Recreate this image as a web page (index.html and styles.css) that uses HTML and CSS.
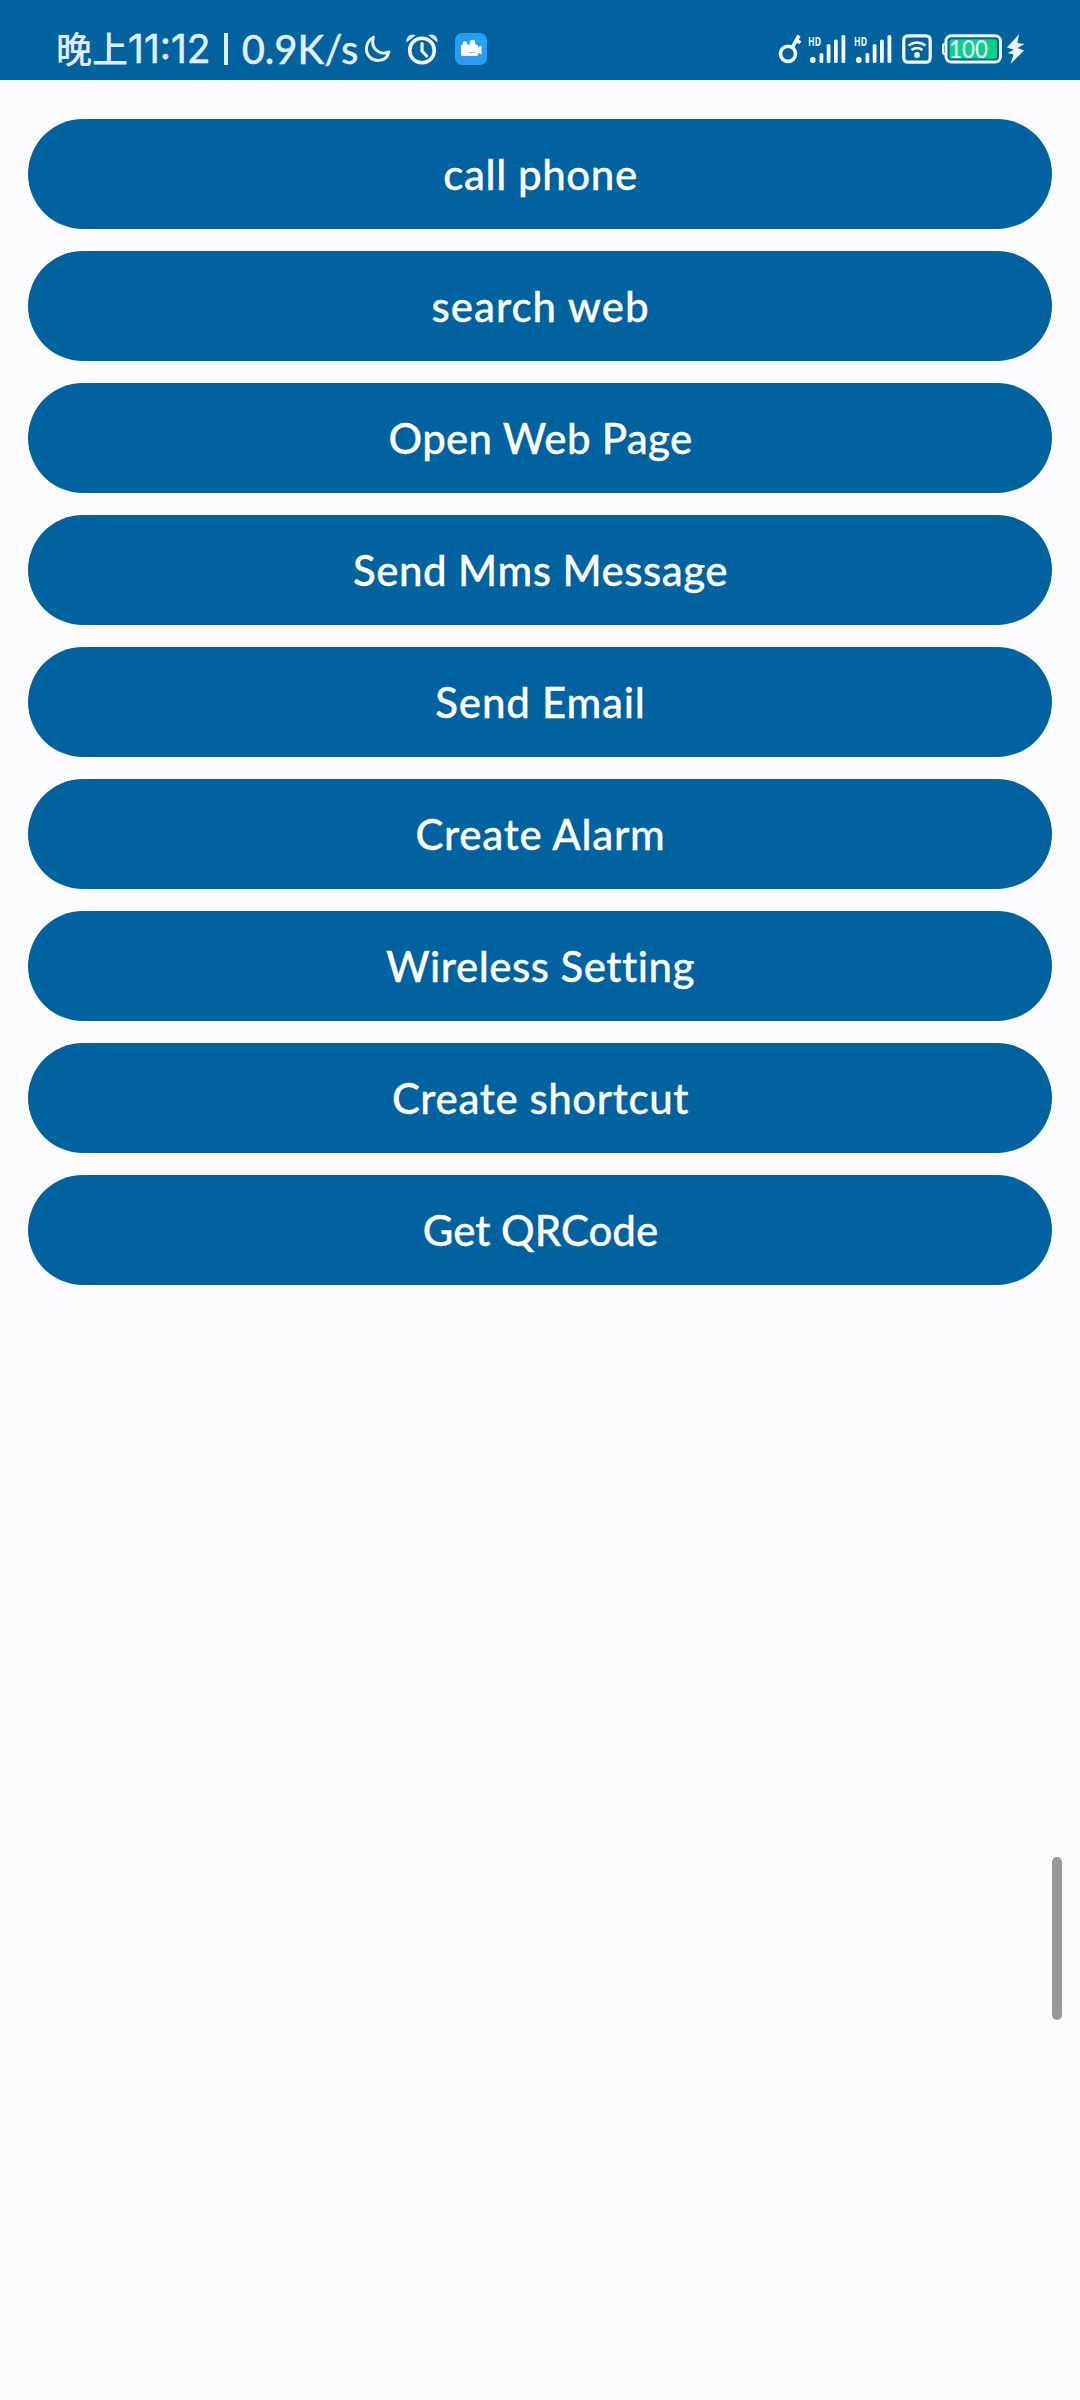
FILE: index.html
```html
<!DOCTYPE html>
<html lang="en">
<head>
<meta charset="utf-8">
<title>Intents</title>
<link rel="stylesheet" href="styles.css">
</head>
<body>
<header class="status-bar">
  <div class="status-left">
    <span class="clock-prefix">晚上</span><span class="clock">11:12</span><span class="divider"></span><span class="speed">0.9K/s</span>
    <svg class="icon-moon" width="28" height="30" viewBox="0 0 28 30"><path d="M9.500 3.200C6.500 5 2.400 9.300 2.400 15c0 6.400 5.200 11.500 11.500 11.500 5.300 0 9.700-3 11-8.600-2 .9-3.500 1.200-5.300 1.200C13.600 19 8.700 14 8.700 8.200c0-1.900.3-3.400.8-5z" fill="none" stroke="#e8f1fa" stroke-width="2.900" stroke-linejoin="round"/></svg>
    <svg class="icon-alarm" width="32" height="32" viewBox="0 0 32 32"><g fill="none" stroke="#f4f8fc" stroke-linecap="round"><circle cx="16" cy="17.500" r="12.300" stroke-width="3.600"/><path d="M16 10.500v7.500l4.600 5" stroke-width="3.200"/></g><path d="M.5 9.500C-.5 4 4.500 0 9.800 2.200zM31.500 9.500C32.500 4 27.500 0 22.200 2.200z" fill="#d5e5f2"/></svg>
    <svg class="icon-recorder" width="32" height="32" viewBox="0 0 32 32"><rect width="32" height="32" rx="7" fill="#279cf0"/><g fill="#fff"><circle cx="10" cy="10.500" r="2.200"/><circle cx="17.500" cy="9.500" r="2.800"/><rect x="6" y="11.500" width="17" height="11.500" rx="1.500"/><path d="M22 14.500l4.500-2v9l-4.500-2z"/></g><path d="M14 19.500h6" stroke="#65bef7"/><path d="M20 5h8M23 8h7M26 11h5M28 14h3" stroke="#3ed0ee" stroke-dasharray="1 2"/></svg>
  </div>
  <div class="status-right">
    <svg class="icon-key" width="24" height="32" viewBox="0 0 24 32"><g fill="none" stroke="#f4f8fc" stroke-width="3.600"><circle cx="10" cy="20.800" r="7.600"/><path d="M14.500 14L21 2.500M17.500 7l5 2.800"/></g></svg>
    <svg class="icon-signal" width="38" height="30" viewBox="0 0 38 30"><text class="hd" x="0" y="12" textLength="13" lengthAdjust="spacingAndGlyphs">HD</text><g fill="#f4f8fc"><circle cx="4.800" cy="26" r="2.900"/><rect x="11.500" y="19" width="3.800" height="10" rx="1.600"/><rect x="18.700" y="10" width="3.800" height="19" rx="1.600"/><rect x="26" y="5.500" width="3.800" height="23.500" rx="1.600"/><rect x="33.500" y="1" width="3.800" height="28" rx="1.600"/></g></svg>
    <svg class="icon-signal" width="38" height="30" viewBox="0 0 38 30"><text class="hd" x="0" y="12" textLength="13" lengthAdjust="spacingAndGlyphs">HD</text><g fill="#f4f8fc"><circle cx="4.800" cy="26" r="2.900"/><rect x="11.500" y="19" width="3.800" height="10" rx="1.600"/><rect x="18.700" y="10" width="3.800" height="19" rx="1.600"/><rect x="26" y="5.500" width="3.800" height="23.500" rx="1.600"/><rect x="33.500" y="1" width="3.800" height="28" rx="1.600"/></g></svg>
    <svg class="icon-wifi" width="30" height="30" viewBox="0 0 30 30"><g fill="none" stroke="#f4f8fc" stroke-width="3.200"><rect x="1.800" y="1.800" width="26.400" height="26.400" rx="4"/><path d="M6.500 11.500q8.500-6 17 0M9.500 16q5.500-4 11 0" stroke-width="2.600"/></g><circle cx="15" cy="21" r="2.900" fill="#f4f8fc"/></svg>
    <svg class="icon-battery" width="60" height="30" viewBox="0 0 60 30"><path d="M4 10H2.500A1.500 1.500 0 0 0 1 11.500v7A1.500 1.500 0 0 0 2.500 20H4" fill="none" stroke="#f4f8fc" stroke-width="2"/><rect x="4" y="1.800" width="54.500" height="26.200" rx="5.500" fill="none" stroke="#f4f8fc" stroke-width="3"/><rect x="7.500" y="5.200" width="47.500" height="19.500" rx="2" fill="#08d284"/><text class="level" x="7" y="23.500" textLength="39" lengthAdjust="spacingAndGlyphs">100</text></svg>
    <svg class="icon-bolt" width="20" height="32" viewBox="0 0 20 32"><path d="M13 1L1 14.500l7 2.200L1.500 20l6 1.500L4.500 31 18 17.500l-6.500-2.500 7-4-7-1z" fill="#e8f1fa"/></svg>
  </div>
</header>
<main class="actions">
  <button class="action call">call phone</button>
  <button class="action search">search web</button>
  <button class="action open">Open Web Page</button>
  <button class="action mms">Send Mms Message</button>
  <button class="action email">Send Email</button>
  <button class="action alarm">Create Alarm</button>
  <button class="action wireless">Wireless Setting</button>
  <button class="action shortcut">Create shortcut</button>
  <button class="action qrcode">Get QRCode</button>
</main>
<div class="scroll-thumb"></div>
</body>
</html>
```
FILE: styles.css
```css
* { box-sizing: border-box; }
body {
  margin: 0;
  min-height: 2400px;
  background: #fcfcff;
  font-family: Lato, "Noto Sans CJK SC", sans-serif;
}
.status-bar {
  display: flex;
  justify-content: space-between;
  height: 80px;
  padding: 18px 54px 0 56px;
  background: #00629f;
  color: #e2eefa;
}
.status-bar svg { overflow: visible; }
.status-left, .status-right { display: flex; align-items: center; }
.clock-prefix {
  padding-bottom: 4px;
  font: 500 36px/58px "Noto Sans CJK SC", sans-serif;
}
.clock {
  font: 400 39px/62px Inter, sans-serif;
  -webkit-text-stroke: 0.5px #e2eefa;
}
.speed {
  font-size: 40px;
  font-weight: 500;
  line-height: 62px;
  -webkit-text-stroke: 0.3px #e2eefa;
}
.divider { width: 4px; height: 32px; margin: 0 14px 0 13px; background: #e2eefa; }
.icon-moon { margin-left: 6px; }
.icon-alarm { margin-left: 14px; }
.icon-recorder { margin-left: 17px; }
.icon-signal { margin-left: 8px; }
.icon-key + .icon-signal { margin-left: 6px; }
.icon-wifi { margin-left: 10px; }
.icon-battery { margin-left: 10px; }
.icon-bolt { margin-left: 4px; }
.hd { font: 700 12px "Noto Sans", sans-serif; fill: #f4f8fc; }
.level { font: 500 24.5px Lato, sans-serif; fill: #e8f1fa; }
.actions {
  display: flex;
  flex-direction: column;
  gap: 22px;
  padding: 39px 28px 0;
}
.action {
  height: 110px;
  padding: 0 0 1px 1px;
  border: 0;
  border-radius: 55px;
  background: #00629f;
  color: #fff;
  font: 500 42px/108px Lato, sans-serif;
  -webkit-text-stroke: 0.3px #fff;
}
.call { letter-spacing: 0.6px; }
.search { letter-spacing: 1px; }
.open { letter-spacing: 0.3px; }
.mms { letter-spacing: 0.5px; }
.email { letter-spacing: 0.8px; }
.alarm { letter-spacing: 0.7px; }
.wireless { letter-spacing: 0.5px; }
.shortcut { letter-spacing: 0.6px; }
.scroll-thumb {
  position: absolute;
  left: 1052px;
  top: 1857px;
  width: 10px;
  height: 163px;
  border-radius: 5px;
  background: #98989a;
}
```
